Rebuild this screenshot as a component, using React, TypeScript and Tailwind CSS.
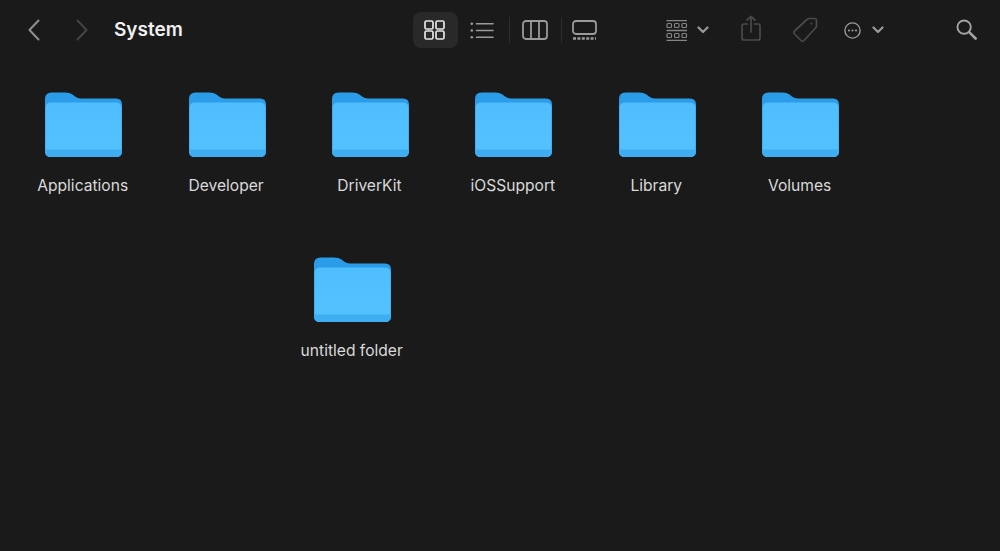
import React from "react";

const Folder = () => (
  <svg width="77" height="65" viewBox="0 0 77 65" className="block">
    <defs>
      <linearGradient id="front" x1="0" y1="0" x2="0" y2="1">
        <stop offset="0" stopColor="#50bdff" />
        <stop offset="1" stopColor="#55c2ff" />
      </linearGradient>
    </defs>
    <path d="M0 7 Q0 0.5 6.5 0.5 H20 Q25 0.5 27.5 2.5 L30 4.5 Q32.5 6.5 36 6.5 H71 Q77 6.5 77 12.5 V59 Q77 65 71 65 H6 Q0 65 0 59 Z" fill="#2b9de8" />
    <path d="M0.5 16 Q0.5 10.5 6 10.5 H71 Q76.5 10.5 76.5 16 V59 Q76.5 65 71 65 H6 Q0.5 65 0.5 59 Z" fill="url(#front)" />
    <path d="M0 57.5 H77 V59 Q77 65 71 65 H6 Q0 65 0 59 Z" fill="#3fadf2" />
  </svg>
);

const Item = ({ name }: { name: string }) => (
  <div className="flex w-[143.4px] shrink-0 flex-col items-center">
    <Folder />
    <div className="ml-[-2px] mt-[20px] text-[15.6px] leading-[18px] text-[#d9d9d9] whitespace-nowrap">{name}</div>
  </div>
);

const stroke = "#9a9a9a";
const dim = "#4a4a4a";

export default function App() {
  return (
    <div className="h-[551px] w-[1000px] overflow-hidden bg-[#1a1a1b] font-['Inter','Liberation_Sans',sans-serif]">
      <header className="flex h-[60px] items-center">
        <svg width="14" height="22" viewBox="0 0 14 22" className="ml-[27px] mt-[-1px]" fill="none" stroke="#8f8f8f" strokeWidth="2" strokeLinecap="round" strokeLinejoin="round"><path d="M11.5 1.5 2.5 11l9 9.5" /></svg>
        <svg width="14" height="22" viewBox="0 0 14 22" className="ml-[34px] mt-[-1px]" fill="none" stroke="#444" strokeWidth="2" strokeLinecap="round" strokeLinejoin="round"><path d="M2.5 1.5 11.5 11l-9 9.5" /></svg>
        <div className="ml-[25px] w-[299px] text-[19px] font-semibold leading-6 text-[#f0f0f0]">System</div>

        <div className="flex h-[36px] w-[45px] items-center justify-center rounded-lg bg-[#292929]">
          <svg width="21" height="20" viewBox="0 0 21 20" className="ml-[-2px]" fill="none" stroke="#e6e6e6" strokeWidth="1.7">
            <rect x="1" y="1" width="8" height="8" rx="1.5" /><rect x="12" y="1" width="8" height="8" rx="1.5" /><rect x="1" y="11" width="8" height="8" rx="1.5" /><rect x="12" y="11" width="8" height="8" rx="1.5" />
          </svg>
        </div>
        <svg width="24" height="17" viewBox="0 0 24 17" className="ml-[12px]" fill="none" stroke={stroke} strokeWidth="1.6" strokeLinecap="round">
          <path d="M6.5 1.8H23M6.5 8.5H23M6.5 15.2H23" />
          <circle cx="1.8" cy="1.8" r="1.3" fill={stroke} stroke="none" /><circle cx="1.8" cy="8.5" r="1.3" fill={stroke} stroke="none" /><circle cx="1.8" cy="15.2" r="1.3" fill={stroke} stroke="none" />
        </svg>
        <div className="ml-[15px] h-[26px] w-px bg-[#2e2e2e]" />
        <svg width="26" height="20" viewBox="0 0 26 20" className="ml-[12px]" fill="none" stroke={stroke} strokeWidth="1.8">
          <rect x="1" y="1" width="24" height="18" rx="3" /><path d="M9 1V19M17 1V19" />
        </svg>
        <div className="ml-[13px] h-[26px] w-px bg-[#2e2e2e]" />
        <svg width="25" height="20" viewBox="0 0 25 20" className="ml-[10px]" fill="none" stroke={stroke} strokeWidth="1.8">
          <rect x="1" y="1" width="23" height="13" rx="3" />
          <path d="M1 18.5H24" strokeWidth="2.4" strokeDasharray="3 1.4" />
        </svg>

        <svg width="22" height="21" viewBox="0 0 22 21" className="ml-[69px]" fill="none" stroke="#858585" strokeWidth="1.2">
          <path d="M0.5 0.7H21M0.5 10.5H21M0.5 20.3H21" strokeWidth="1.3" />
          <rect x="1" y="3.5" width="4.5" height="4" rx="1" /><rect x="8.5" y="3.5" width="4.5" height="4" rx="1" /><rect x="16" y="3.5" width="4.5" height="4" rx="1" />
          <rect x="1" y="13.5" width="4.5" height="4" rx="1" /><rect x="8.5" y="13.5" width="4.5" height="4" rx="1" /><rect x="16" y="13.5" width="4.5" height="4" rx="1" />
        </svg>
        <svg width="12" height="8" viewBox="0 0 12 8" className="ml-[9px]" fill="none" stroke="#9a9a9a" strokeWidth="2.2" strokeLinecap="round" strokeLinejoin="round"><path d="M1.5 1.5 6 6l4.5-4.5" /></svg>

        <svg width="20" height="26" viewBox="0 0 20 26" className="ml-[32px] mt-[-4px]" fill="none" stroke={dim} strokeWidth="1.7" strokeLinecap="round" strokeLinejoin="round">
          <path d="M6.5 9H3Q1 9 1 11V23Q1 25 3 25H17Q19 25 19 23V11Q19 9 17 9H13.5" /><path d="M10 17V1.5M6 5 10 1.5 14 5" />
        </svg>
        <svg width="26" height="26" viewBox="0 0 26 26" className="ml-[31px]" fill="none" stroke={dim} strokeWidth="1.7" strokeLinejoin="round">
          <path d="M15 2.5Q16 1.5 17.5 1.5H22.5Q24.5 1.5 24.5 3.5V8.5Q24.5 10 23.5 11L12 23.5Q10.5 25 9 23.5L2.5 17Q1 15.5 2.5 14Z" /><circle cx="19.5" cy="6.5" r="1" fill={dim} stroke="none" />
        </svg>

        <svg width="17" height="17" viewBox="0 0 17 17" className="ml-[26px]" fill="none" stroke="#9a9a9a" strokeWidth="1.4">
          <circle cx="8.5" cy="8.5" r="7.6" /><circle cx="5" cy="8.5" r="1.1" fill="#9a9a9a" stroke="none" /><circle cx="8.5" cy="8.5" r="1.1" fill="#9a9a9a" stroke="none" /><circle cx="12" cy="8.5" r="1.1" fill="#9a9a9a" stroke="none" />
        </svg>
        <svg width="12" height="8" viewBox="0 0 12 8" className="ml-[11px]" fill="none" stroke="#9a9a9a" strokeWidth="2.2" strokeLinecap="round" strokeLinejoin="round"><path d="M1.5 1.5 6 6l4.5-4.5" /></svg>

        <svg width="21" height="21" viewBox="0 0 22 22" className="ml-[72px] mt-[-2px]" fill="none" stroke="#a3a3a3" strokeWidth="2" strokeLinecap="round">
          <circle cx="8.5" cy="8.5" r="7" /><path d="M13.8 13.8 20.5 20.5" strokeWidth="2.8" />
        </svg>
      </header>

      <main className="pl-[12px] pt-[32px]">
        <div className="flex">
          {["Applications", "Developer", "DriverKit", "iOSSupport", "Library", "Volumes"].map((n) => (
            <Item key={n} name={n} />
          ))}
        </div>
        <div className="ml-[269px] mt-[62px] flex">
          <Item name="untitled folder" />
        </div>
      </main>
    </div>
  );
}
